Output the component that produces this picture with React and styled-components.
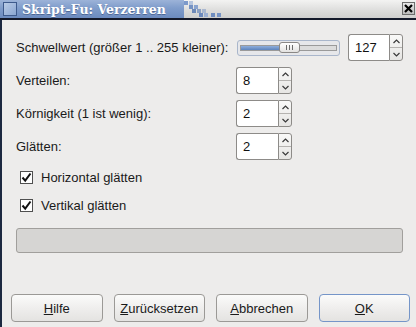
import React from 'react'
import styled, { createGlobalStyle } from 'styled-components'

const GlobalStyle = createGlobalStyle`
  html, body {
    margin: 0;
    padding: 0;
    background: #edeceb;
  }
  body {
    font-family: "Liberation Sans", Arial, sans-serif;
    font-size: 13px;
    color: #1a1a1a;
  }
`

const Window = styled.div`
  width: 416px;
  height: 327px;
  display: flex;
  flex-direction: column;
  overflow: hidden;
  background: #edeceb;
`

const TitleBar = styled.div`
  height: 18px;
  flex: none;
  display: flex;
  align-items: stretch;
  border-bottom: 2px solid #14192a;
  background: linear-gradient(to bottom, #f3f3f2 0%, #dcdcdb 60%, #cfcfce 100%);
`

const TitleBlue = styled.div`
  width: 184px;
  flex: none;
  display: flex;
  align-items: center;
  padding-left: 3px;
  box-sizing: border-box;
  background: linear-gradient(to bottom, #9cb3d8 0%, #7f9ccb 45%, #6c8bbf 100%);
`

const WinIcon = styled.div`
  width: 14px;
  height: 14px;
  box-sizing: border-box;
  border: 1px solid #3e5a8c;
  background: linear-gradient(135deg, #b9cbe6 0%, #8aa6d2 100%);
  margin-right: 5px;
`

const TitleText = styled.span`
  font-family: "DejaVu Serif", serif;
  font-weight: bold;
  font-size: 12.5px;
  color: #ffffff;
  text-shadow: 0 1px 0 rgba(40, 60, 100, 0.5);
  white-space: nowrap;
`

const Spacer = styled.div`
  flex: 1;
`

const CloseBox = styled.div`
  width: 13px;
  height: 13px;
  margin: 2px 1px 0 0;
  box-sizing: border-box;
  border: 1px solid #6d6d6d;
  background: linear-gradient(to bottom, #e8e8e8, #bdbdbd);
  display: flex;
  align-items: center;
  justify-content: center;
`

const Body = styled.div`
  flex: 1;
  display: flex;
  flex-direction: column;
  border-left: 2px solid #1c2840;
  padding: 14px 13px 5px 14px;
`

const Form = styled.div`
  display: grid;
  grid-template-columns: 220px auto;
  grid-auto-rows: 27px;
  row-gap: 6px;
  align-items: center;
`

const Label = styled.div`
  white-space: nowrap;
`

const ControlRow = styled.div`
  display: flex;
  align-items: center;
  gap: 8px;
`

const SliderFrame = styled.div`
  width: 103px;
  height: 16px;
  box-sizing: border-box;
  border: 1px solid #a9b6cb;
  border-radius: 3px;
  background: #e6e7ea;
  display: flex;
  align-items: center;
  padding: 0 2px;
  margin-left: 1px;
`

const Trough = styled.div`
  flex: 1;
  height: 6px;
  box-sizing: border-box;
  border: 1px solid #9a9a9a;
  background: #dcdcdc;
  display: flex;
  align-items: center;
`

const TroughFill = styled.div`
  height: 4px;
  background: linear-gradient(to bottom, #8eaedb, #5d84bd);
`

const Thumb = styled.div`
  width: 21px;
  height: 11px;
  box-sizing: border-box;
  border: 1px solid #8a8886;
  border-radius: 3px;
  background: linear-gradient(to bottom, #ffffff, #e3e2e0);
  display: flex;
  align-items: center;
  justify-content: center;
  gap: 2px;
  flex: none;
`

const Grip = styled.span`
  width: 1px;
  height: 5px;
  background: #6b6b6b;
`

const Spin = styled.div`
  display: flex;
  height: 27px;
`

const SpinEntry = styled.div`
  width: ${p => p.w}px;
  box-sizing: border-box;
  border: 1px solid #8d8b88;
  border-right: none;
  border-radius: 3px 0 0 3px;
  background: #ffffff;
  padding-left: 6px;
  display: flex;
  align-items: center;
  font-size: 13px;
  color: #111;
`

const SpinButtons = styled.div`
  width: 14px;
  box-sizing: border-box;
  border: 1px solid #8d8b88;
  border-radius: 0 3px 3px 0;
  background: linear-gradient(to bottom, #f9f9f8, #e6e5e3);
  display: flex;
  flex-direction: column;
`

const SpinHalf = styled.div`
  flex: 1;
  display: flex;
  align-items: center;
  justify-content: center;
  & + & {
    border-top: 1px solid #b5b3b0;
  }
`

const CheckRow = styled.label`
  display: flex;
  align-items: center;
  height: 20px;
  padding-left: 4px;
  margin-top: ${p => p.mt}px;
`

const CheckBox = styled.div`
  width: 13px;
  height: 13px;
  box-sizing: border-box;
  border: 1px solid #4f4f4f;
  background: #ffffff;
  margin-right: 8px;
  display: flex;
  align-items: center;
  justify-content: center;
`

const Progress = styled.div`
  margin-top: 13px;
  height: 25px;
  box-sizing: border-box;
  border: 1px solid #a19f9c;
  border-radius: 3px;
  background: #d6d5d3;
`

const ButtonRow = styled.div`
  margin-top: auto;
  display: flex;
  gap: 11px;
  margin-left: -5px;
  margin-right: -7px;
`

const Button = styled.div`
  flex: 1;
  height: 28px;
  box-sizing: border-box;
  border: 1px solid ${p => (p.primary ? '#7595c8' : '#9b9996')};
  border-radius: 4px;
  background: linear-gradient(to bottom, #fbfbfa 0%, #efeeed 50%, #e4e3e1 100%);
  display: flex;
  align-items: center;
  justify-content: center;
  color: #1a1a1a;
  u {
    text-decoration: underline;
    text-underline-offset: 1px;
  }
`

const Chevron = ({ down }) => (
  <svg width="7" height="5" viewBox="0 0 7 5">
    <path
      d={down ? 'M0.5 1 L3.5 4 L6.5 1' : 'M0.5 4 L3.5 1 L6.5 4'}
      fill="none"
      stroke="#3a3a3a"
      strokeWidth="1.2"
    />
  </svg>
)

const SpinBox = ({ value, w = 42 }) => (
  <Spin>
    <SpinEntry w={w}>{value}</SpinEntry>
    <SpinButtons>
      <SpinHalf><Chevron /></SpinHalf>
      <SpinHalf><Chevron down /></SpinHalf>
    </SpinButtons>
  </Spin>
)

const Check = () => (
  <svg width="11" height="11" viewBox="0 0 11 11">
    <path d="M1.5 5.5 L4.2 8.6 L9.5 1.5" fill="none" stroke="#111" strokeWidth="2" />
  </svg>
)

const squares = [
  [0, 1, '#7d9acb'], [5, 1, '#b7c6de'],
  [5, 5, '#7592c3'], [10, 5, '#8aa4cf'],
  [8, 9, '#6d89b8'], [13, 9, '#8a9fc2'], [18, 9, '#aab8d0'],
  [15, 13, '#6c89bd'], [20, 13, '#9cb0d3'], [27, 13, '#6f8dc0'], [33, 13, '#7794c6'],
]

const Pattern = () => (
  <svg width="40" height="18" viewBox="0 0 40 18">
    {squares.map(([x, y, c], i) => (
      <rect key={i} x={x} y={y} width="4" height="4" fill={c} />
    ))}
  </svg>
)

export default function App() {
  return (
    <>
      <GlobalStyle />
      <Window>
        <TitleBar>
          <TitleBlue>
            <WinIcon />
            <TitleText>Skript-Fu: Verzerren</TitleText>
          </TitleBlue>
          <Pattern />
          <Spacer />
          <CloseBox>
            <svg width="9" height="9" viewBox="0 0 9 9">
              <path d="M1 1 L8 8 M8 1 L1 8" stroke="#000" strokeWidth="2.2" />
            </svg>
          </CloseBox>
        </TitleBar>
        <Body>
          <Form>
            <Label>Schwellwert (größer 1 .. 255 kleiner):</Label>
            <ControlRow>
              <SliderFrame>
                <Trough>
                  <TroughFill style={{ width: 38 }} />
                  <Thumb><Grip /><Grip /><Grip /></Thumb>
                </Trough>
              </SliderFrame>
              <SpinBox value="127" w={41} />
            </ControlRow>
            <Label>Verteilen:</Label>
            <SpinBox value="8" />
            <Label>Körnigkeit (1 ist wenig):</Label>
            <SpinBox value="2" />
            <Label>Glätten:</Label>
            <SpinBox value="2" />
          </Form>
          <CheckRow mt={7}>
            <CheckBox><Check /></CheckBox>
            Horizontal glätten
          </CheckRow>
          <CheckRow mt={8}>
            <CheckBox><Check /></CheckBox>
            Vertikal glätten
          </CheckRow>
          <Progress />
          <ButtonRow>
            <Button><span><u>H</u>ilfe</span></Button>
            <Button><span><u>Z</u>urücksetzen</span></Button>
            <Button><span><u>A</u>bbrechen</span></Button>
            <Button primary><span><u>O</u>K</span></Button>
          </ButtonRow>
        </Body>
      </Window>
    </>
  )
}
